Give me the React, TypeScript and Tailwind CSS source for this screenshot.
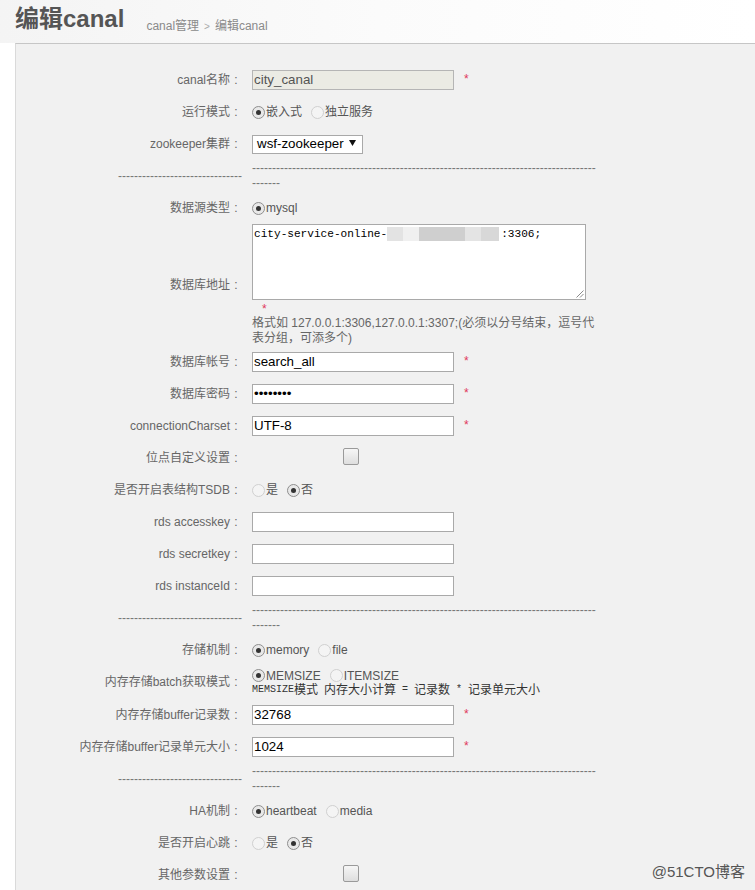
import React from "react";

const FONT = "font-['Liberation_Sans','Noto_Sans_CJK_SC',sans-serif]";

function Radio({ checked }: { checked?: boolean }) {
  return (
    <span
      className={
        checked
          ? "relative inline-block w-[13px] h-[13px] shrink-0 rounded-full border border-[#8e8e8e] bg-[#e8e8e8]"
          : "relative inline-block w-[13px] h-[13px] shrink-0 rounded-full border border-[#d0d0d0] bg-[#f4f4f4]"
      }
    >
      {checked && (
        <span className="absolute left-[3px] top-[3px] w-[5px] h-[5px] rounded-full bg-[#333]" />
      )}
    </span>
  );
}

function Radios({ items }: { items: { label: string; checked?: boolean }[] }) {
  return (
    <div className="flex items-center gap-[9px] text-[12px] text-[#555] leading-[14px]">
      {items.map((it) => (
        <span key={it.label} className="flex items-center">
          <Radio checked={it.checked} />
          <span className="ml-[1px]">{it.label}</span>
        </span>
      ))}
    </div>
  );
}

function TextInput({ value, disabled, star }: { value?: string; disabled?: boolean; star?: boolean }) {
  return (
    <div className="flex items-center">
      <div
        className={
          disabled
            ? "w-[202px] h-[20px] border border-[#b5b5b5] bg-[#ebebe4] text-[#545454] text-[13.33px] leading-[18px] pl-[1px] whitespace-pre"
            : "w-[202px] h-[20px] border border-[#a9a9a9] bg-white text-black text-[13.33px] leading-[18px] pl-[1px] whitespace-pre"
        }
      >
        {value}
      </div>
      {star && <span className="ml-[10px] text-[12px] leading-[12px] text-[#e0385c] -mt-[2px]">*</span>}
    </div>
  );
}

function Label({ text }: { text: string }) {
  return (
    <>
      {text}
      <span className="inline-block w-[12px] text-center">:</span>
    </>
  );
}

function Row({ label, children, h = "h-[32px]" }: { label: string; children?: React.ReactNode; h?: string }) {
  return (
    <div className={`flex items-center ${h}`}>
      <div className="w-[226px] shrink-0 text-right text-[12px] leading-[15px] text-[#666] whitespace-nowrap">
        <Label text={label} />
      </div>
      <div className="ml-[10px] flex items-center">{children}</div>
    </div>
  );
}

function Divider() {
  return (
    <div className="flex items-center h-[32px] text-[12px] leading-[15px] text-[#777]">
      <div className="w-[226px] shrink-0 text-right whitespace-nowrap">{"-".repeat(31)}</div>
      <div className="ml-[10px] flex flex-col whitespace-nowrap">
        <span>{"-".repeat(86)}</span>
        <span>{"-".repeat(7)}</span>
      </div>
    </div>
  );
}

function Checkbox() {
  return (
    <span className="ml-[91px] -mt-[3px] inline-block w-[16px] h-[17px] rounded-[2px] border border-[#9a9a9a] bg-gradient-to-b from-[#f6f6f6] to-[#dedede]" />
  );
}

const M = "font-['Liberation_Mono',monospace] text-[10px]";

export default function App() {
  return (
    <div className={`relative w-[755px] min-h-[890px] overflow-hidden bg-white ${FONT}`}>
      <div className="h-[43px] bg-gradient-to-r from-[#f4f4f4] via-[#fbfbfb] to-white pl-[15px] pt-[4px] flex items-baseline">
        <span className="text-[24px] leading-[30px] font-bold text-[#555]">编辑canal</span>
        <span className="relative top-[3px] ml-[22px] text-[12px] text-[#8a8a8a]">
          canal管理<span className="px-[5px] text-[10px] text-[#aaa]">&gt;</span>编辑canal
        </span>
      </div>

      <div className="ml-[15px] border-t border-l border-t-[#c6c6c6] border-l-[#dadada] bg-[#f1f1f1] pt-[20px] pb-[40px]">
        <Row label="canal名称">
          <TextInput value="city_canal" disabled star />
        </Row>
        <Row label="运行模式">
          <Radios items={[{ label: "嵌入式", checked: true }, { label: "独立服务" }]} />
        </Row>
        <Row label="zookeeper集群">
          <div className="w-[111px] h-[19px] border border-[#a9a9a9] bg-white flex items-center pl-[4px] text-[13.33px] text-black">
            <span>wsf-zookeeper</span>
            <svg width="7" height="6" viewBox="0 0 7 6" className="ml-[5px] mb-[2px]">
              <polygon points="0,0 7,0 3.5,6" fill="#111" />
            </svg>
          </div>
        </Row>
        <Divider />
        <Row label="数据源类型">
          <Radios items={[{ label: "mysql", checked: true }]} />
        </Row>
        <Row label="数据库地址" h="h-[122px]">
          <div className="flex flex-col">
            <div className="relative w-[334px] h-[76px] border border-[#a9a9a9] bg-white">
              <div className="flex items-center pt-[2px] pl-[1px] font-['Liberation_Mono',monospace] text-[11.1px] leading-[14px] text-black whitespace-pre">
                <span>city-service-online-</span>
                <span className="inline-block w-[16px] h-[14px] bg-[#e3e3e3]" />
                <span className="inline-block w-[16px] h-[14px] bg-[#f0f0f0]" />
                <span className="inline-block w-[46px] h-[14px] bg-[#cfcfcf]" />
                <span className="inline-block w-[16px] h-[14px] bg-[#e4e4e4]" />
                <span className="inline-block w-[18px] h-[14px] bg-[#d8d8d8]" />
                <span className="inline-block w-[2px] h-[14px]" />
                <span>:3306;</span>
              </div>
              <svg width="9" height="9" viewBox="0 0 9 9" className="absolute right-[1px] bottom-[1px]">
                <line x1="8.5" y1="1.5" x2="1.5" y2="8.5" stroke="#8a8a8a" strokeWidth="1" />
                <line x1="8.5" y1="5" x2="5" y2="8.5" stroke="#8a8a8a" strokeWidth="1" />
              </svg>
            </div>
            <div className="h-[16px] pl-[10px] pt-[2px] text-[12px] leading-[14px] text-[#e0385c]">*</div>
            <div className="text-[12px] leading-[15px] text-[#666] whitespace-nowrap">
              格式如 127.0.0.1:3306,127.0.0.1:3307;(必须以分号结束，逗号代
              <br />
              表分组，可添多个)
            </div>
          </div>
        </Row>
        <Row label="数据库帐号">
          <TextInput value="search_all" star />
        </Row>
        <Row label="数据库密码">
          <TextInput value="••••••••" star />
        </Row>
        <Row label="connectionCharset">
          <TextInput value="UTF-8" star />
        </Row>
        <Row label="位点自定义设置">
          <Checkbox />
        </Row>
        <Row label="是否开启表结构TSDB">
          <Radios items={[{ label: "是" }, { label: "否", checked: true }]} />
        </Row>
        <Row label="rds accesskey">
          <TextInput />
        </Row>
        <Row label="rds secretkey">
          <TextInput />
        </Row>
        <Row label="rds instanceId">
          <TextInput />
        </Row>
        <Divider />
        <Row label="存储机制">
          <Radios items={[{ label: "memory", checked: true }, { label: "file" }]} />
        </Row>
        <Row label="内存存储batch获取模式" h="h-[33px]">
          <div className="flex flex-col">
            <Radios items={[{ label: "MEMSIZE", checked: true }, { label: "ITEMSIZE" }]} />
            <div className="flex items-center h-[14px] text-[12px] leading-[14px] text-[#333] whitespace-pre">
              <span className={M}>MEMSIZE</span>
              <span>模式</span>
              <span className={M}> </span>
              <span>内存大小计算</span>
              <span className={M}> = </span>
              <span>记录数</span>
              <span className={M}> * </span>
              <span>记录单元大小</span>
            </div>
          </div>
        </Row>
        <Row label="内存存储buffer记录数">
          <TextInput value="32768" star />
        </Row>
        <Row label="内存存储buffer记录单元大小">
          <TextInput value="1024" star />
        </Row>
        <Divider />
        <Row label="HA机制">
          <Radios items={[{ label: "heartbeat", checked: true }, { label: "media" }]} />
        </Row>
        <Row label="是否开启心跳">
          <Radios items={[{ label: "是" }, { label: "否", checked: true }]} />
        </Row>
        <Row label="其他参数设置">
          <Checkbox />
        </Row>
      </div>

      <div className="absolute right-[10px] top-[862px] text-[15px] leading-[20px] text-[#555]">@51CTO博客</div>
    </div>
  );
}
